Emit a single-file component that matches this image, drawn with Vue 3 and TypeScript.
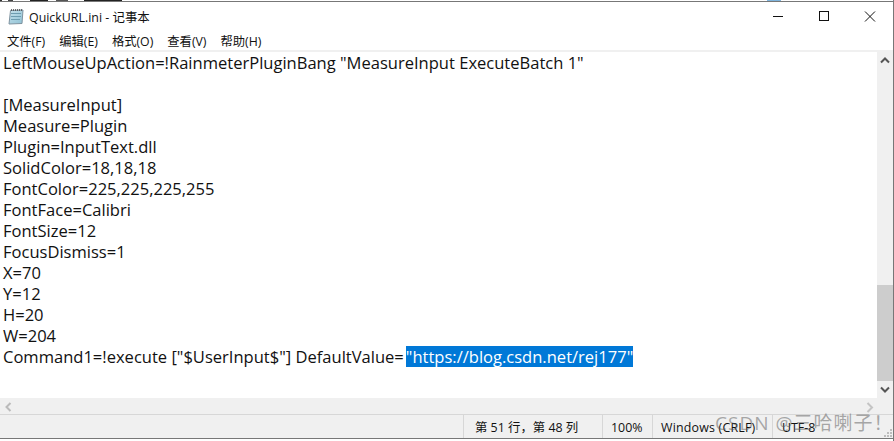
<script setup lang="ts">
const menus = ['文件(F)', '编辑(E)', '格式(O)', '查看(V)', '帮助(H)']
const lines = [
  'LeftMouseUpAction=!RainmeterPluginBang "MeasureInput ExecuteBatch 1"',
  '',
  '[MeasureInput]',
  'Measure=Plugin',
  'Plugin=InputText.dll',
  'SolidColor=18,18,18',
  'FontColor=225,225,225,255',
  'FontFace=Calibri',
  'FontSize=12',
  'FocusDismiss=1',
  'X=70',
  'Y=12',
  'H=20',
  'W=204',
]
</script>

<template>
  <div class="window">
    <div class="sliver"></div>
    <header class="titlebar">
      <svg class="app-icon" width="16" height="18" viewBox="0 0 16 18">
        <defs>
          <linearGradient id="pad" x1="0" y1="0" x2="1" y2="1">
            <stop offset="0" stop-color="#c6e2ec" />
            <stop offset="1" stop-color="#8fc1d4" />
          </linearGradient>
        </defs>
        <path d="M2.5 2.5 L15 2 L14 15.5 L1 16 Z" fill="url(#pad)" stroke="#7f93a0" stroke-width="1" />
        <path d="M3 5.5 H13 M3 8.5 H13 M3 11.5 H12" stroke="#6e9db0" stroke-width="1" />
        <path d="M3 2 H14" stroke="#444" stroke-width="1.4" stroke-dasharray="1 1" />
      </svg>
      <span class="title">QuickURL.ini - 记事本</span>
      <div class="controls">
        <svg width="46" height="30" viewBox="0 0 46 30"><path d="M18 14.5 H28" stroke="#111" /></svg>
        <svg width="46" height="30" viewBox="0 0 46 30"><rect x="18.5" y="9.5" width="9" height="9" fill="none" stroke="#111" /></svg>
        <svg width="46" height="30" viewBox="0 0 46 30"><path d="M18 9.5 L28 19.5 M28 9.5 L18 19.5" stroke="#111" /></svg>
      </div>
    </header>
    <nav class="menubar">
      <span v-for="m in menus" :key="m" class="menu">{{ m }}</span>
    </nav>
    <div class="middle">
      <main class="editor">
        <div v-for="(l, i) in lines" :key="i" class="line">{{ l }}</div>
        <div class="line">Command1=!execute ["$UserInput$"] DefaultValue=<span class="sel">"https://blog.csdn.net/rej177"</span></div>
      </main>
      <aside class="vscroll">
        <svg class="arrow" width="16" height="17" viewBox="0 0 16 17"><path d="M4 10.5 L8 6.5 L12 10.5" fill="none" stroke="#555" stroke-width="2" /></svg>
        <div class="track"><div class="thumb"></div></div>
        <svg class="arrow" width="16" height="17" viewBox="0 0 16 17"><path d="M4 6.5 L8 10.5 L12 6.5" fill="none" stroke="#555" stroke-width="2" /></svg>
      </aside>
    </div>
    <div class="hscroll">
      <svg width="17" height="16" viewBox="0 0 17 16"><path d="M10.5 4 L6.5 8 L10.5 12" fill="none" stroke="#bbb" stroke-width="2" /></svg>
    </div>
    <footer class="status">
      <div class="cell grow"></div>
      <div class="cell pos">第 51 行，第 48 列</div>
      <div class="cell zoom">100%</div>
      <div class="cell eol">Windows (CRLF)</div>
      <div class="cell enc">UTF-8</div>
    </footer>
    <svg class="grip" width="8" height="8" viewBox="0 0 8 8">
      <path d="M6 0h2v2H6zM3 3h2v2H3zM6 3h2v2H6zM0 6h2v2H0zM3 6h2v2H3zM6 6h2v2H6z" fill="#bdbdbd" />
    </svg>
    <svg class="mark" width="8" height="11" viewBox="0 0 8 11">
      <path d="M1.5 1 L6 5.5 L1.5 10" fill="none" stroke="#c4c4c4" stroke-width="2" />
    </svg>
    <div class="watermark">CSDN @三哈喇子！</div>
  </div>
</template>

<style>
html, body { margin: 0; background: #fff; overflow: hidden; }
</style>

<style scoped>
.window {
  position: relative;
  width: 894px;
  height: 441px;
  display: flex;
  flex-direction: column;
  overflow: hidden;
  background: #fff;
  font-family: "Open Sans", "Noto Sans CJK SC", sans-serif;
  color: #111;
  box-sizing: border-box;
  border-right: 1px solid #777;
}
.sliver {
  height: 2px;
  flex: none;
  box-sizing: border-box;
  border-bottom: 1px solid #777;
  background: linear-gradient(90deg,
    #333 0 2px, #fff 2px 8px, #444 8px 13px, #fff 13px 30px, #222 30px 48px, #fff 48px 56px, #555 56px 68px,
    #fff 68px 84px, #222 84px 122px, #fff 122px 767px, #7fb4dc 767px 781px, #fff 781px);
}
.titlebar { height: 30px; flex: none; display: flex; align-items: center; padding-left: 8px; }
.app-icon { margin-right: 5px; }
.title { font-size: 12.4px; }
.controls { margin-left: auto; display: flex; }
.menubar { height: 18px; flex: none; display: flex; align-items: center; font-size: 12.3px; padding-left: 7px; gap: 14px; }
.middle { flex: 1; min-height: 0; display: flex; border-top: 2px solid #f0f0f0; }
.editor { flex: 1; overflow: hidden; font-size: 16.55px; line-height: 21px; }
.line { height: 21px; padding-left: 3px; white-space: pre; }
.sel { display: inline-block; height: 21px; margin-left: 2px; background: #0078d7; color: #fff; }
.vscroll { width: 16px; background: #f0f0f0; display: flex; flex-direction: column; }
.arrow { flex: none; }
.track { flex: 1; display: flex; flex-direction: column; justify-content: flex-end; }
.thumb { height: 96px; background: #cdcdcd; }
.hscroll { height: 16px; flex: none; background: #f0f0f0; }
.status { height: 23px; flex: none; margin-bottom: 2px; display: flex; align-items: center; background: #f0f0f0; border-top: 1px solid #d7d7d7; font-size: 12.4px; border-bottom: 1px solid #777; }
.cell { height: 100%; display: flex; align-items: center; border-left: 1px solid #d7d7d7; padding-left: 11px; padding-top: 1px; box-sizing: border-box; white-space: pre; }
.grow { flex: 1; border-left: none; }
.pos { width: 139px; }
.zoom { width: 50px; padding-left: 8px; }
.eol { width: 120px; padding-left: 8px; letter-spacing: .2px; }
.enc { width: 121px; padding-left: 9px; }
.grip { position: absolute; left: 884px; top: 429px; }
.mark { position: absolute; left: 866px; top: 402px; }
.watermark { position: absolute; left: 715px; top: 408px; font-size: 19px; letter-spacing: 1px; color: rgba(90, 90, 90, .5); white-space: nowrap; }
</style>
